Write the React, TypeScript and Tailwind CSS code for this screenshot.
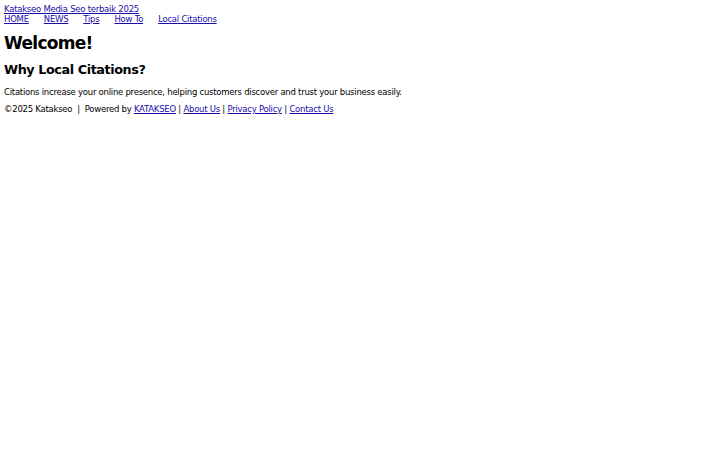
export default function App() {
  const nav = ['HOME', 'NEWS', 'Tips', 'How To', 'Local Citations']
  const link = 'text-[#1a0dab] underline'

  return (
    <div className="min-h-screen bg-white px-[4px] pt-[4px] text-[8.5px] leading-[10px] tracking-[-0.25px] text-black font-['DejaVu_Sans',sans-serif]">
      <header>
        <a href="#" className={`${link} block w-fit`}>
          Katakseo Media Seo terbaik 2025
        </a>
        <nav className="flex gap-[15px]">
          {nav.map((n) => (
            <a key={n} href="#" className={link}>
              {n}
            </a>
          ))}
        </nav>
      </header>

      <main>
        <h1 className="mt-[9px] mb-[9px] text-[17px] leading-[20px] tracking-[-0.7px] font-bold">Welcome!</h1>
        <h2 className="mt-[9px] mb-[10px] text-[12.75px] leading-[15px] tracking-[-0.4px] font-bold">Why Local Citations?</h2>
        <p className="my-[7px]">
          Citations increase your online presence, helping customers discover and trust your business easily.
        </p>
      </main>

      <footer>
        ©2025 Katakseo &nbsp;|&nbsp; Powered by{' '}
        <a href="#" className={link}>KATAKSEO</a> |{' '}
        <a href="#" className={link}>About Us</a> |{' '}
        <a href="#" className={link}>Privacy Policy</a> |{' '}
        <a href="#" className={link}>Contact Us</a>
      </footer>
    </div>
  )
}
